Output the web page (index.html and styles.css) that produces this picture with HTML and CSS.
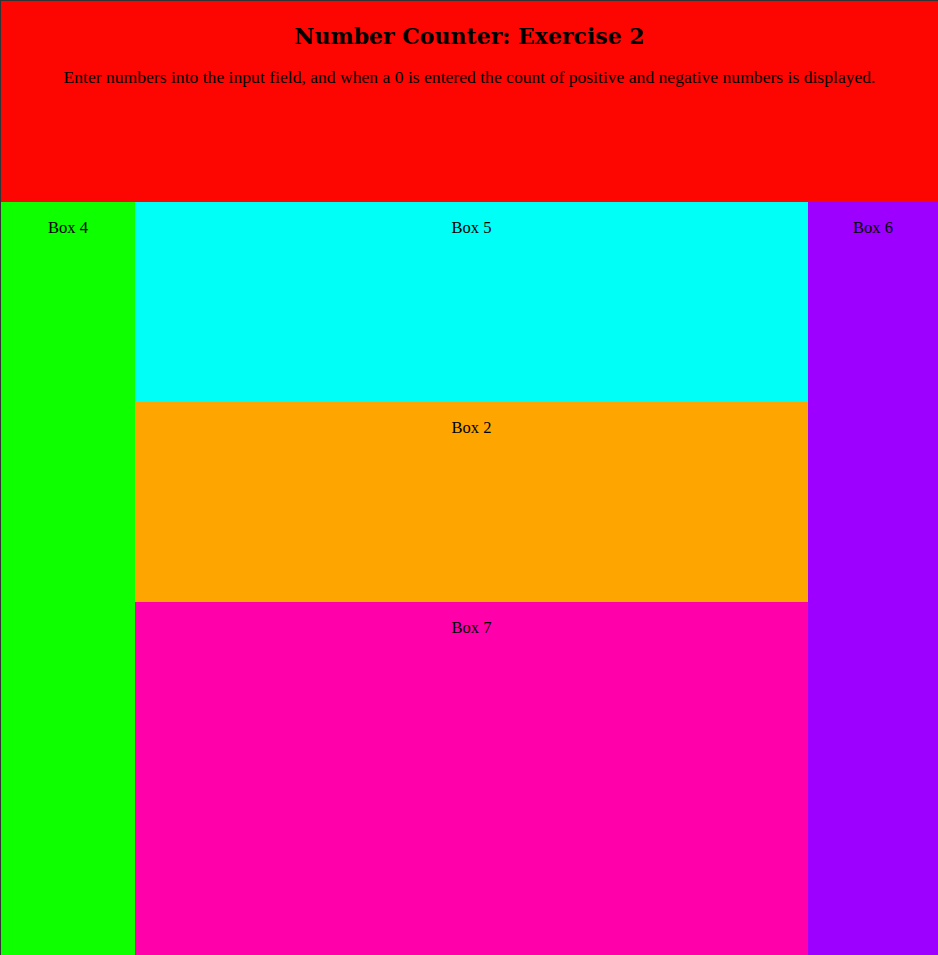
FILE: index.html
```html
<!DOCTYPE html>
<html>
<head>
<meta charset="utf-8">
<link rel="stylesheet" href="styles.css">
</head>
<body>
<div class="page">
  <header class="box box-1">
    <h1 class="title">Number Counter: Exercise 2</h1>
    <p class="intro">Enter numbers into the input field, and when a 0 is entered the count of positive and negative numbers is displayed.</p>
  </header>
  <div class="main">
    <aside class="box box-4">Box 4</aside>
    <div class="center">
      <section class="box box-5">Box 5</section>
      <section class="box box-2">Box 2</section>
      <section class="box box-7">Box 7</section>
    </div>
    <aside class="box box-6">Box 6</aside>
  </div>
</div>
</body>
</html>
```
FILE: styles.css
```css
html, body {
  margin: 0;
  padding: 0;
}
body {
  font-family: "Liberation Serif", serif;
  font-size: 16.5px;
  color: #000;
  background: #fff;
}
.page {
  border-top: 1px solid #333;
  border-left: 1px solid #333;
  height: 954px;
  overflow: hidden;
  display: flex;
  flex-direction: column;
}
.box {
  text-align: center;
  box-sizing: border-box;
}
.box-1 {
  background: #fd0500;
  height: 201px;
  padding-top: 21px;
}
.title {
  margin: 0;
  font-family: "DejaVu Serif", "Liberation Serif", serif;
  font-size: 22px;
  font-weight: bold;
  line-height: 28px;
}
.intro {
  margin: 17px 0 0;
  font-size: 17.6px;
  line-height: 20px;
}
.main {
  display: flex;
  flex: 1;
}
.box-4 {
  background: #0dff00;
  width: 134px;
  padding-top: 16px;
}
.center {
  flex: 1;
  display: flex;
  flex-direction: column;
}
.box-6 {
  background: #9d00ff;
  width: 130px;
  padding-top: 16px;
}
.box-5 {
  background: #00fff6;
  height: 200px;
  padding-top: 16px;
}
.box-2 {
  background: #ffa500;
  height: 200px;
  padding-top: 16px;
}
.box-7 {
  background: #ff00aa;
  flex: 1;
  padding-top: 16px;
}
```
